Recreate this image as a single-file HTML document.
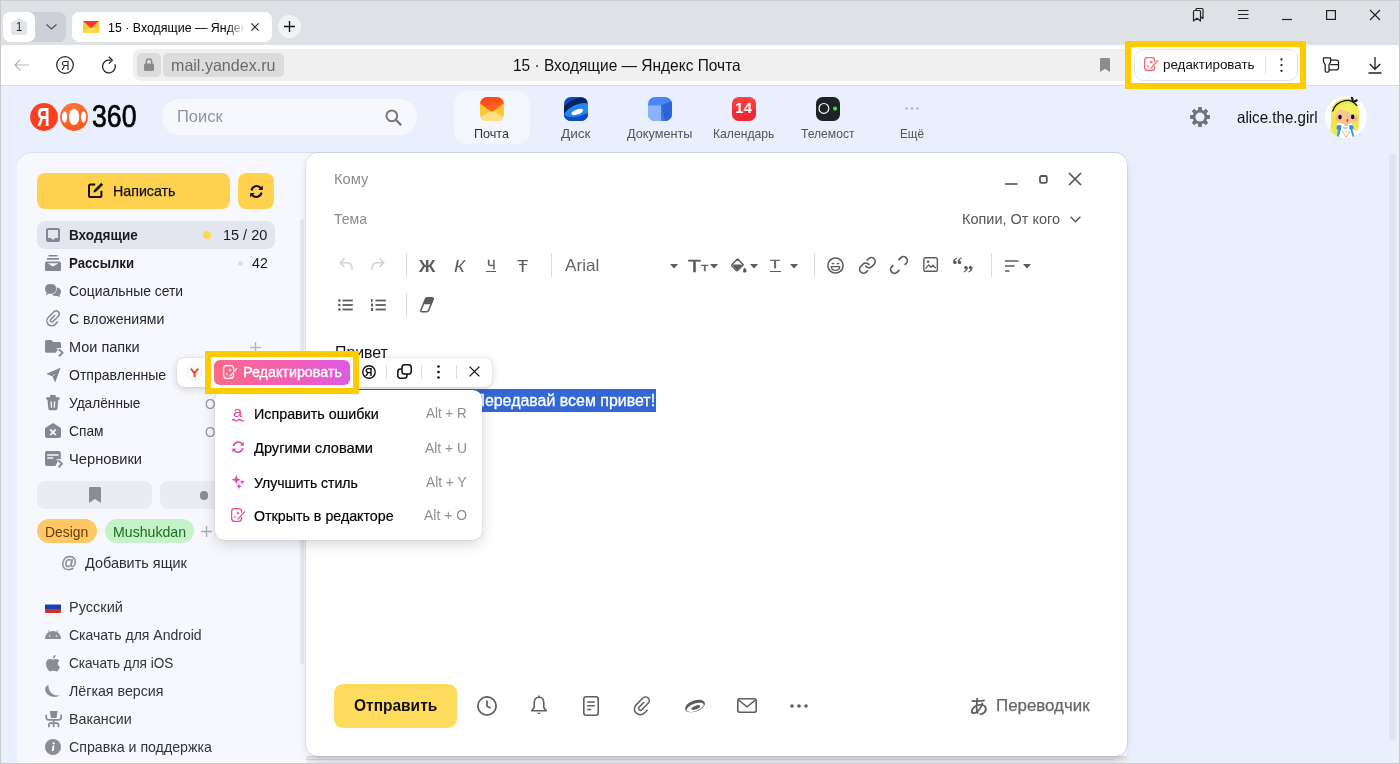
<!DOCTYPE html>
<html lang="ru"><head><meta charset="utf-8"><title>15 · Входящие — Яндекс Почта</title>
<style>
*{box-sizing:border-box;margin:0;padding:0}
html,body{width:1400px;height:764px;overflow:hidden}
body{position:relative;background:#eaeffe;font-family:"Liberation Sans",sans-serif;color:#000;font-size:15px}
.a{position:absolute}
.t{position:absolute;white-space:nowrap;line-height:1;transform-origin:0 50%}
svg{position:absolute;overflow:visible}
.dv{position:absolute;width:1px;background:#dcdcdc}

</style></head><body>
<div class="a" style="left:0px;top:0px;width:1400px;height:45px;background:#dee1e6"></div>
<div class="a" style="left:0px;top:45px;width:1400px;height:40px;background:#fff;border-radius:5px 5px 0 0"></div>
<div class="a" style="left:0px;top:85px;width:1400px;height:1px;background:#d7dbeb"></div>
<div class="a" style="left:3px;top:12px;width:63px;height:30px;background:#cdd0d6;border-radius:7px"></div>
<div class="a" style="left:3px;top:12px;width:32px;height:30px;background:#fff;border-radius:7px"></div>
<svg style="left:11px;top:18px;" width="16" height="17" viewBox="0 0 16 17"><path d="M8 .6 14.6 3.4Q16 4 16 5.6V13.5Q16 17 12.5 17H3.5Q0 17 0 13.5V5.6Q0 4 1.4 3.4Z" fill="#e1e4ea"/></svg>
<span class="t" style="left:15.50px;top:20.38px;font-size:13.5px;color:#222;transform:scaleX(0.8245);">1</span>
<svg style="left:45.5px;top:24px;" width="11" height="6" viewBox="0 0 11 6"><path d="M.5 .5 5.5 5 10.5 .5" fill="none" stroke="#555" stroke-width="1.3"/></svg>
<div class="a" style="left:72px;top:12px;width:200px;height:30px;background:#fff;border-radius:7px"></div>
<svg style="left:83px;top:21px;" width="16" height="12" viewBox="0 0 16 12"><rect width="16" height="12" fill="#ffcc33"/><path d="M0 12 8 5.5 16 12Z" fill="#ffdb4d"/><path d="M0 0H16L8 7.2Z" fill="#ff3333"/></svg>
<div class="a" style="left:107px;top:17px;width:140px;height:20px;overflow:hidden;-webkit-mask-image:linear-gradient(90deg,#000 120px,transparent 138px);mask-image:linear-gradient(90deg,#000 120px,transparent 138px)">
<span class="t" style="left:1.00px;top:3.54px;font-size:13.6px;color:#000;transform:scaleX(0.9117);">15 · Входящие — Яндекс Почта</span>
</div>
<svg style="left:251px;top:23px;" width="8" height="8" viewBox="0 0 8 8"><path d="M.4 .4 7.600 7.600M7.600 .4 .4 7.600" stroke="#222" stroke-width="1.100" fill="none"/></svg>
<div class="a" style="left:278px;top:15px;width:23px;height:23px;background:#f1f3f6;border-radius:50%"></div>
<svg style="left:284px;top:21px;" width="11" height="11" viewBox="0 0 11 11"><path d="M5.5 0V11M0 5.5H11" stroke="#111" stroke-width="1.3" fill="none"/></svg>
<svg style="left:1190px;top:7px;" width="16" height="16" viewBox="0 0 16 16"><path d="M3.5 4.5V14L7 11.2 10.5 14V4.5Q10.5 3.5 9.5 3.5H4.5Q3.5 3.5 3.5 4.5ZM6 3.2V2.5Q6 1.5 7 1.5H12Q13 1.5 13 2.5V11.5L10.7 9.7" fill="none" stroke="#222" stroke-width="1.2" stroke-linejoin="round"/></svg>
<svg style="left:1238px;top:10px;" width="10.5" height="9" viewBox="0 0 10.5 9"><path d="M0 .5H10.500M0 4.500H10.500M0 8.500H10.500" stroke="#222" stroke-width="1.200"/></svg>
<svg style="left:1282px;top:19px;" width="10" height="1" viewBox="0 0 10 1"><path d="M0 .5H10" stroke="#222" stroke-width="1.200"/></svg>
<svg style="left:1326px;top:10px;" width="10" height="10" viewBox="0 0 10 10"><rect x=".6" y=".6" width="8.8" height="8.8" fill="none" stroke="#222" stroke-width="1.2"/></svg>
<svg style="left:1370px;top:10px;" width="10" height="10" viewBox="0 0 10 10"><path d="M0 0 10 10M10 0 0 10" stroke="#222" stroke-width="1.2"/></svg>
<svg style="left:14px;top:59px;" width="15" height="12" viewBox="0 0 15 12"><path d="M6.5 .5 1 6 6.5 11.5M1 6H15" fill="none" stroke="#b5b5b5" stroke-width="1.2"/></svg>
<svg style="left:56px;top:56px;" width="18" height="18" viewBox="0 0 18 18"><circle cx="9" cy="9" r="8.3" fill="none" stroke="#222" stroke-width="1.2"/></svg>
<span class="t" style="left:60.50px;top:58.83px;font-size:13px;color:#222;transform:scaleX(0.9046);">Я</span>
<svg style="left:101px;top:56px;" width="16" height="18" viewBox="0 0 16 18"><path d="M13.9 8.2A6.4 6.4 0 1 1 9.6 4.3" fill="none" stroke="#222" stroke-width="1.3"/><path d="M7.8 .8 11.3 4.3 7.8 7.6" fill="none" stroke="#222" stroke-width="1.3"/></svg>
<div class="a" style="left:133px;top:49px;width:1003px;height:32px;background:#f0f0f0;border-radius:8px"></div>
<div class="a" style="left:137px;top:53px;width:24px;height:24px;background:#dcdcdc;border-radius:5px"></div>
<svg style="left:144px;top:58px;" width="10" height="13" viewBox="0 0 10 13"><rect x="0" y="5.5" width="10" height="7.5" rx="1.6" fill="#8a8a8a"/><path d="M2.3 6V3.7A2.7 2.7 0 0 1 7.7 3.7V6" fill="none" stroke="#8a8a8a" stroke-width="1.4"/></svg>
<div class="a" style="left:163px;top:53px;width:121px;height:24px;background:#dcdcdc;border-radius:5px"></div>
<span class="t" style="left:171.00px;top:56.71px;font-size:16.5px;color:#6a6a6a;transform:scaleX(0.9732);">mail.yandex.ru</span>
<span class="t" style="left:512.70px;top:57.12px;font-size:16.5px;color:#111;transform:scaleX(0.9376);">15 · Входящие — Яндекс Почта</span>
<svg style="left:1100px;top:58px;" width="10" height="14" viewBox="0 0 10 14"><path d="M0 1.2Q0 0 1.2 0H8.8Q10 0 10 1.2V14L5 10.8 0 14Z" fill="#8c8c8c"/></svg>
<div class="a" style="left:1125px;top:41px;width:181px;height:48px;background:#fff;border:6px solid #ffcc00"></div>
<div class="a" style="left:1133.5px;top:49px;width:164px;height:31.5px;background:#fff;border:1px solid #e3e3e3;border-radius:9px"></div>
<svg style="left:1144.4px;top:57.4px;" width="15" height="15" viewBox="0 0 15 15"><g fill="none" stroke="#ff5c72" stroke-width="1.250" stroke-linecap="round"><path d="M10.600 4.300V3.400Q10.600 .65 7.800 .65H3.400Q.65 .65 .65 3.400V10.600Q.65 13.350 3.400 13.350H7.800Q10.600 13.350 10.600 10.600V9.300"/><path d="M13.700 3.700 7.100 11.100"/></g><path d="M7 3.100 7.550 4.550 9 5.100 7.550 5.650 7 7.100 6.450 5.650 5 5.100 6.450 4.550Z" fill="#ff5c72"/><path d="M4 7.600 4.400 8.600 5.400 9 4.400 9.400 4 10.400 3.600 9.400 2.600 9 3.600 8.600Z" fill="#ff5c72"/></svg>
<span class="t" style="left:1162.90px;top:58.48px;font-size:13.5px;color:#111;transform:scaleX(0.9912);">редактировать</span>
<div class="a" style="left:1265px;top:56px;width:1px;height:18px;background:#e0e0e0"></div>
<svg style="left:1280px;top:57.6px;" width="3" height="14" viewBox="0 0 3 14"><circle cx="1.500" cy="1.400" r="1.150" fill="#222"/><circle cx="1.500" cy="7.100" r="1.150" fill="#222"/><circle cx="1.500" cy="12.800" r="1.150" fill="#222"/></svg>
<svg style="left:1322px;top:56px;" width="18" height="18" viewBox="0 0 18 18"><path d="M1.5 1.8H8.2Q8.6 1.8 8.6 2.2V5Q8.6 6.5 7.6 7.6 7 8.3 7 9.3V14.7Q7 16.2 5.5 16.2H4.7Q3.2 16.2 3.2 14.7V9.3Q3.2 8.3 2.6 7.6 1.5 6.5 1.5 5ZM8.6 4.2H14.5Q16.5 4.2 16.5 6.2V11.8Q16.5 13.8 14.5 13.8H7M8.3 8.6H16.5" fill="none" stroke="#222" stroke-width="1.3" stroke-linejoin="round"/></svg>
<svg style="left:1368px;top:57px;" width="14" height="17" viewBox="0 0 14 17"><path d="M7 0V12M1.8 7 7 12.3 12.2 7M.5 16H13.5" fill="none" stroke="#222" stroke-width="1.3"/></svg>
<svg style="left:30px;top:103px;" width="28" height="28" viewBox="0 0 28 28"><circle cx="14" cy="14" r="13.900" fill="#fc3f1d"/></svg>
<span class="t" style="left:37.20px;top:104.22px;font-size:26.5px;color:#fff;font-weight:700;transform:scaleX(0.6611);">Я</span>
<svg style="left:60px;top:103px;" width="28" height="28" viewBox="0 0 28 28"><defs><radialGradient id="lg2" cx=".4" cy=".3" r=".8"><stop offset="0" stop-color="#ff7a40"/><stop offset=".6" stop-color="#fb6429"/><stop offset="1" stop-color="#ee5018"/></radialGradient><clipPath id="cp2"><circle cx="14" cy="14" r="13.900"/></clipPath></defs><circle cx="14" cy="14" r="13.900" fill="url(#lg2)"/><g clip-path="url(#cp2)" fill="#fff"><ellipse cx="14.100" cy="14" rx="5.100" ry="8.100"/><ellipse cx="4.500" cy="14" rx="2.600" ry="5.800"/><ellipse cx="23.600" cy="14" rx="2.600" ry="5.800"/></g></svg>
<span class="t" style="left:92.30px;top:101.01px;font-size:31px;color:#000;transform:scaleX(0.8596);-webkit-text-stroke:.7px #000;">360</span>
<div class="a" style="left:162px;top:99px;width:255px;height:36px;background:#f7f8fe;border-radius:18px"></div>
<span class="t" style="left:177.30px;top:108.47px;font-size:17px;color:#93949f;transform:scaleX(0.9716);">Поиск</span>
<svg style="left:385px;top:109px;" width="17" height="17" viewBox="0 0 17 17"><circle cx="6.8" cy="6.8" r="5.4" fill="none" stroke="#777" stroke-width="2"/><path d="M10.8 10.8 15.6 15.6" stroke="#777" stroke-width="2.2" stroke-linecap="round"/></svg>
<div class="a" style="left:454px;top:91px;width:76px;height:53px;background:#f4f6fe;border-radius:13px"></div>
<svg style="left:480px;top:97px;" width="24" height="24" viewBox="0 0 24 24"><defs><linearGradient id="m1" x1="0" y1="0" x2=".6" y2="1"><stop offset="0" stop-color="#ff3a1a"/><stop offset="1" stop-color="#ff6f1c"/></linearGradient><clipPath id="mc"><rect width="24" height="24" rx="7"/></clipPath></defs><g clip-path="url(#mc)"><rect width="24" height="24" fill="#ffc832"/><path d="M0 24V21L12 12.500 24 21V24Z" fill="#ffe084"/><path d="M0 0H24V6.500L12.800 14.600Q12 15.200 11.200 14.600L0 6.500Z" fill="url(#m1)"/></g></svg>
<svg style="left:564px;top:97px;" width="24" height="24" viewBox="0 0 24 24"><defs><clipPath id="dk"><rect width="24" height="24" rx="7"/></clipPath></defs><g clip-path="url(#dk)"><rect width="24" height="24" fill="#0a4cc0"/><ellipse cx="11" cy="9" rx="13" ry="6.500" transform="rotate(-27 11 9)" fill="#06235e"/><ellipse cx="13" cy="15.500" rx="15" ry="7.500" transform="rotate(-27 13 15.500)" fill="#2486f3"/><ellipse cx="13.200" cy="15" rx="6.200" ry="2.500" transform="rotate(-20 13.200 15)" fill="#fff"/><path d="M0 17Q6 24 24 16V24H0Z" fill="#0a4cc0"/></g></svg>
<svg style="left:648px;top:97px;" width="24" height="24" viewBox="0 0 24 24"><defs><clipPath id="dc"><rect width="24" height="24" rx="7"/></clipPath></defs><g clip-path="url(#dc)"><rect width="24" height="24" fill="#4a86f7"/><path d="M13 8.500 24 4V24H17Z" fill="#2f63d8"/><path d="M0 8.500H13L13.500 24H0Z" fill="#8ab2ff"/><path d="M13 8.500 17 24H13.500Z" fill="#3d74ea"/></g></svg>
<svg style="left:732px;top:97px;" width="24" height="24" viewBox="0 0 24 24"><defs><linearGradient id="cal" x1="0" y1="0" x2="0" y2="1"><stop offset="0" stop-color="#ff4242"/><stop offset=".52" stop-color="#f7343a"/><stop offset=".53" stop-color="#ee2a32"/><stop offset="1" stop-color="#ee2a32"/></linearGradient></defs><rect width="24" height="24" rx="6.500" fill="url(#cal)"/></svg>
<span class="t" style="left:734.80px;top:100.80px;font-size:14.5px;color:#fff;font-weight:700;transform:scaleX(1.0526);">14</span>
<svg style="left:816px;top:97px;" width="24" height="24" viewBox="0 0 24 24"><rect width="24" height="24" rx="6.5" fill="#1d2226"/><circle cx="7.900" cy="11.400" r="4.900" fill="none" stroke="#fff" stroke-width="1.200"/><circle cx="19.100" cy="11.600" r="2.100" fill="#25e83a"/></svg>
<svg style="left:904.5px;top:107.3px;" width="14" height="3" viewBox="0 0 14 3"><circle cx="1.5" cy="1.5" r="1.4" fill="#b9bcc6"/><circle cx="7" cy="1.5" r="1.4" fill="#b9bcc6"/><circle cx="12.5" cy="1.5" r="1.4" fill="#b9bcc6"/></svg>
<span class="t" style="left:474.00px;top:126.69px;font-size:13.5px;color:#333;transform:scaleX(0.9328);">Почта</span>
<span class="t" style="left:561.00px;top:126.69px;font-size:13.5px;color:#555;transform:scaleX(1.0047);">Диск</span>
<span class="t" style="left:627.00px;top:126.69px;font-size:13.5px;color:#555;transform:scaleX(0.9406);">Документы</span>
<span class="t" style="left:713.00px;top:126.69px;font-size:13.5px;color:#555;transform:scaleX(0.9020);">Календарь</span>
<span class="t" style="left:801.00px;top:126.69px;font-size:13.5px;color:#555;transform:scaleX(0.8963);">Телемост</span>
<span class="t" style="left:899.50px;top:126.69px;font-size:13.5px;color:#555;transform:scaleX(0.8683);">Ещё</span>
<svg style="left:1190px;top:107px;" width="20" height="20" viewBox="0 0 20 20"><g transform="translate(10 10)"><g fill="#6f7178"><rect x="-1.900" y="-10" width="3.800" height="20" rx=".8"/><rect x="-1.900" y="-10" width="3.800" height="20" rx=".8" transform="rotate(45)"/><rect x="-1.900" y="-10" width="3.800" height="20" rx=".8" transform="rotate(90)"/><rect x="-1.900" y="-10" width="3.800" height="20" rx=".8" transform="rotate(135)"/><circle r="7.300"/></g><circle r="4.600" fill="#eaeffe"/></g></svg>
<span class="t" style="left:1236.80px;top:108.92px;font-size:16.5px;color:#111;transform:scaleX(0.9160);">alice.the.girl</span>
<svg style="left:1325px;top:96px;" width="42" height="42" viewBox="0 0 42 42"><defs><clipPath id="av"><circle cx="21" cy="21" r="21"/></clipPath></defs><circle cx="21" cy="21" r="21" fill="#fff"/><g clip-path="url(#av)"><path d="M6 20Q5 6 19 2.500Q32 2 33.800 14Q34.500 24 33.500 33Q31 36 27.500 33.500L27 27 12.500 27 13.500 38Q11 43 7 43L4.500 36Q6.500 30 6 20Z" fill="#ece650"/><path d="M4.400 33.500Q6 31.500 7.800 33L7.500 35.500Q6 34 4.800 35Z" fill="#f3ee8a"/><rect x="19.300" y="26.500" width="3.600" height="4.500" fill="#f3b57e"/><path d="M10 19Q10 13 16 12.500L31 12.500Q33.800 20 31.300 25Q27 28.800 21.500 28.200Q13 27.800 10.500 23Z" fill="#f8c691"/><circle cx="12.800" cy="23" r="2.200" fill="#f6a49a" opacity=".75"/><circle cx="30.500" cy="23" r="2" fill="#f6a49a" opacity=".75"/><path d="M9.300 21Q9.500 9.500 20 8Q30 7 33.200 13.500Q33.800 17 33.200 19Q26 18 21 15.200Q16.500 13 13.800 13.800Q11 16.500 9.300 21Z" fill="#f4ee62"/><path d="M7.800 15Q10.500 6.500 20 4.600Q27 3.300 31.700 9.400" fill="none" stroke="#111" stroke-width="1.300" stroke-linecap="round"/><path d="M27.300 5.800Q24.800 1 26.600 .6Q29.200 1.400 28.500 5Q31 2.600 33 3.600Q33 6.200 28.600 6.800Z" fill="#111"/><ellipse cx="15" cy="21.100" rx="1.750" ry="2.450" fill="#111"/><ellipse cx="27.700" cy="20.900" rx="1.750" ry="2.450" fill="#111"/><ellipse cx="22.400" cy="24.400" rx="1" ry="1.650" fill="#e8415f"/><path d="M22.600 20.500 23.600 21.800" stroke="#e89a78" stroke-width=".6"/><circle cx="14.300" cy="31.800" r="2.700" fill="#2f8fe8"/><circle cx="26" cy="31.400" r="2.500" fill="#2f8fe8"/><path d="M13 34 15.500 34 14 42 11.500 42Z" fill="#3f97e8"/><path d="M25.500 34 27.500 34 30 42 28 42Z" fill="#3f97e8"/><path d="M16.300 33.500H25L28 43H13.500Z" fill="#fff"/><path d="M16.300 30.200Q20.300 29.400 24.300 30.200L24.600 33.800Q20.300 34.800 16 33.800Z" fill="#fff"/><path d="M18.500 31.300Q20.500 32 22.500 31.300L22.300 32.300Q20.500 32.900 18.700 32.300Z" fill="#4a9aea"/><path d="M17.300 35 21 41.300 24.800 35" fill="none" stroke="#f0835a" stroke-width=".7"/><path d="M20.200 34.500 21 35.800 21.800 34.500Z" fill="#d8435a"/></g></svg>
<div class="a" style="left:17px;top:152.5px;width:1110px;height:620px;background:#f7f8fe;border-radius:14px 12px 0 0;box-shadow:0 -1px 0 rgba(190,198,230,.35)"></div>
<div class="a" style="left:1389px;top:153.5px;width:7px;height:587px;background:#dfe3f2;border-radius:3.500px"></div>
<div class="a" style="left:299.5px;top:219px;width:4.5px;height:445px;background:#e6e8f1;border-radius:3px"></div>
<div class="a" style="left:37px;top:173px;width:193px;height:36px;background:#ffd14f;border-radius:8px"></div>
<svg style="left:88px;top:183px;" width="15" height="15" viewBox="0 0 15 15"><path d="M7.2 1.600H2.600Q1 1.600 1 3.200V12.400Q1 14 2.600 14H11.800Q13.400 14 13.400 12.400V7.800" fill="none" stroke="#111" stroke-width="2"/><path d="M13.300 .3 14.700 1.700 7.900 8.600 5.900 9.100 6.400 7.100Z" fill="#111" stroke="#111" stroke-width=".8" stroke-linejoin="round"/></svg>
<span class="t" style="left:112.50px;top:183.45px;font-size:15px;color:#111;transform:scaleX(0.9482);-webkit-text-stroke:.25px #111;">Написать</span>
<div class="a" style="left:238px;top:173px;width:36px;height:36px;background:#ffd14f;border-radius:8px"></div>
<svg style="left:249.5px;top:184.5px;" width="13" height="13" viewBox="0 0 13 13"><path d="M1.500 5.500A5.200 5.200 0 0 1 10.800 3.200M11.500 7.500A5.200 5.200 0 0 1 2.200 9.800" fill="none" stroke="#111" stroke-width="2"/><path d="M12.800 .5V5H8.300ZM.2 12.500V8H4.700Z" fill="#111"/></svg>
<div class="a" style="left:37px;top:221px;width:238px;height:28px;background:#e4e6ef;border-radius:8px"></div>
<svg style="left:46px;top:228px;" width="14" height="14" viewBox="0 0 14 14"><path d="M2 0H12Q14 0 14 2V12Q14 14 12 14H2Q0 14 0 12V2Q0 0 2 0ZM2 2V10H4.800L7 12 9.200 10H12V2Z" fill="#868794" fill-rule="evenodd"/></svg>
<span class="t" style="left:69.00px;top:227.90px;font-size:14.5px;color:#1a1a1f;font-weight:700;transform:scaleX(0.9351);">Входящие</span>
<div class="a" style="left:203px;top:231px;width:8px;height:8px;background:#ffd84d;border-radius:50%"></div>
<span class="t" style="left:223.00px;top:227.90px;font-size:14.5px;color:#1a1a1f;transform:scaleX(0.9984);">15 / 20</span>
<svg style="left:45px;top:255px;" width="16" height="16" viewBox="0 0 16 16"><path d="M3.500 0H12.500V1.600H3.500ZM2 3H14V4.700H2ZM1.600 6.400H14.400Q16 6.400 16 8V14.400Q16 16 14.400 16H1.600Q0 16 0 14.400V8Q0 6.400 1.600 6.400ZM2.600 8.300 8 11.400 13.400 8.300Z" fill="#868794" fill-rule="evenodd"/></svg>
<span class="t" style="left:69.00px;top:255.90px;font-size:14.5px;color:#1a1a1f;font-weight:700;transform:scaleX(0.9105);">Рассылки</span>
<div class="a" style="left:237.5px;top:260.5px;width:5px;height:5px;background:#dcdfe8;border-radius:50%"></div>
<span class="t" style="left:251.50px;top:255.90px;font-size:14.5px;color:#1a1a1f;transform:scaleX(0.9783);">42</span>
<svg style="left:45px;top:284px;" width="16" height="13" viewBox="0 0 16 13"><path d="M10.800 3.300Q16 3.600 16 7.800Q16 9.600 14.600 10.800L15 13 12.400 11.900Q11.600 12.100 10.700 12.100Q8.500 12.100 7.200 11Z" fill="#868794"/><path d="M5.600 0Q11.200 0 11.200 4.900Q11.200 9.700 5.600 9.700Q4.800 9.700 4.100 9.500L1 11.300 1.600 8.400Q0 7 0 4.900Q0 0 5.600 0Z" fill="#868794" stroke="#f7f8fe" stroke-width="1.100" paint-order="stroke"/></svg>
<span class="t" style="left:69.00px;top:283.89px;font-size:14.5px;color:#26262c;transform:scaleX(0.9572);">Социальные сети</span>
<svg style="left:0px;top:0px;" width="1" height="1" viewBox="0 0 1 1"><g transform="translate(53 318.700) rotate(-45)"><path d="M.85 5.500H-2.500A4.850 4.850 0 0 1 -2.500 -4.200H5.500A3.100 3.100 0 0 1 5.500 2H-2A1.550 1.550 0 0 1 -2 -1.100H3.460" fill="none" stroke="#868794" stroke-width="1.500" stroke-linecap="round"/></g></svg>
<span class="t" style="left:69.00px;top:311.89px;font-size:14.5px;color:#26262c;transform:scaleX(0.9720);">С вложениями</span>
<svg style="left:45px;top:340px;" width="19" height="17" viewBox="0 0 19 17"><path d="M1.600 0H5.800Q6.600 0 7.200 .7L8.300 2H14.400Q16 2 16 3.600V8H11.500L13 9.700 10.500 12.700H1.600Q0 12.700 0 11.100V1.600Q0 0 1.600 0Z" fill="#868794"/><path d="M13.800 9.300 17.600 12.800 14 16.200" fill="none" stroke="#868794" stroke-width="1.900" stroke-linejoin="round"/></svg>
<span class="t" style="left:69.00px;top:339.89px;font-size:14.5px;color:#26262c;transform:scaleX(0.9986);">Мои папки</span>
<svg style="left:249.5px;top:341.5px;" width="11" height="11" viewBox="0 0 11 11"><path d="M5.500 0V11M0 5.500H11" stroke="#b4b6bf" stroke-width="1.400"/></svg>
<svg style="left:45.5px;top:367.5px;" width="15" height="15" viewBox="0 0 15 15"><path d="M14.600 -.2 .3 5.800 6.500 8.600 9.200 14.500Z" fill="#868794"/><path d="M9 6 6.400 8.700" stroke="#f7f8fe" stroke-width=".7"/></svg>
<span class="t" style="left:69.00px;top:367.89px;font-size:14.5px;color:#26262c;transform:scaleX(0.9685);">Отправленные</span>
<svg style="left:46.3px;top:395.3px;" width="14" height="15.5" viewBox="0 0 14 15.5"><path d="M5 0H8.800Q9.800 0 9.800 1V2.300H12.600Q13.800 2.300 13.800 3.500T12.600 4.800H12.300L11.500 13.600Q11.400 15.200 9.800 15.200H4Q2.400 15.200 2.300 13.600L1.500 4.800H1.200Q0 4.800 0 3.500T1.200 2.300H4V1Q4 0 5 0ZM4.500 6.500 4.900 12.800H6.100L5.900 6.500ZM7.900 6.500 7.700 12.800H8.900L9.300 6.500Z" fill="#868794" fill-rule="evenodd"/></svg>
<span class="t" style="left:69.00px;top:395.89px;font-size:14.5px;color:#26262c;transform:scaleX(0.9447);">Удалённые</span>
<span class="t" style="left:204.50px;top:396.64px;font-size:14px;color:#9a9ba3;transform:scaleX(0.9636);">О</span>
<svg style="left:45px;top:423px;" width="16" height="15" viewBox="0 0 16 15"><path d="M8 0 15.200 4.500Q16 5 16 6V13Q16 15 14 15H2Q0 15 0 13V6Q0 5 .8 4.500ZM5.800 5.800 4.600 7 6.800 9.200 4.600 11.400 5.800 12.600 8 10.400 10.200 12.600 11.400 11.400 9.200 9.200 11.400 7 10.200 5.800 8 8Z" fill="#868794" fill-rule="evenodd"/></svg>
<span class="t" style="left:69.00px;top:423.89px;font-size:14.5px;color:#26262c;transform:scaleX(0.9483);">Спам</span>
<span class="t" style="left:204.50px;top:424.64px;font-size:14px;color:#9a9ba3;transform:scaleX(0.9636);">О</span>
<svg style="left:45px;top:451.3px;" width="19" height="17" viewBox="0 0 19 17"><path d="M2 0H13.800Q15.800 0 15.800 2V8.300H11.300L13 10 10.400 15H2Q0 15 0 13V2Q0 0 2 0ZM2.300 3.200V4.800H13.500V3.200ZM2.300 6.300V7.800H8.200V6.300Z" fill="#868794" fill-rule="evenodd"/><path d="M13.300 9.400 17 12.700 13.700 16.400" fill="none" stroke="#868794" stroke-width="1.900" stroke-linejoin="round"/></svg>
<span class="t" style="left:69.00px;top:451.89px;font-size:14.5px;color:#26262c;transform:scaleX(1.0129);">Черновики</span>
<div class="a" style="left:37px;top:481px;width:115px;height:28px;background:#ebecf2;border-radius:8px"></div>
<div class="a" style="left:160px;top:481px;width:115px;height:28px;background:#ebecf2;border-radius:8px"></div>
<svg style="left:89px;top:487px;" width="12" height="16" viewBox="0 0 12 16"><path d="M0 1.200Q0 0 1.200 0H10.800Q12 0 12 1.200V16L6 12 0 16Z" fill="#8b8c96"/></svg>
<div class="a" style="left:199.5px;top:491px;width:8.5px;height:8.5px;background:#8b8c96;border-radius:50%"></div>
<div class="a" style="left:37px;top:519px;width:60px;height:24px;background:#ffc766;border-radius:12px"></div>
<span class="t" style="left:45.10px;top:523.65px;font-size:15px;color:#6a3d00;transform:scaleX(0.9266);">Design</span>
<div class="a" style="left:105px;top:519px;width:88.5px;height:24px;background:#c5f2c6;border-radius:12px"></div>
<span class="t" style="left:113.00px;top:523.65px;font-size:15px;color:#1b6e1f;transform:scaleX(0.9419);">Mushukdan</span>
<svg style="left:200.5px;top:525.5px;" width="11" height="11" viewBox="0 0 11 11"><path d="M5.500 0V11M0 5.500H11" stroke="#aeb0b8" stroke-width="1.400"/></svg>
<span class="t" style="left:60.80px;top:554.12px;font-size:16.5px;color:#8b8c96;transform:scaleX(0.9666);-webkit-text-stroke:.35px #8b8c96;">@</span>
<span class="t" style="left:84.50px;top:555.89px;font-size:14.5px;color:#2e2e35;transform:scaleX(0.9960);">Добавить ящик</span>
<svg style="left:45px;top:601px;" width="16" height="12" viewBox="0 0 16 12"><rect width="16" height="12" rx="1" fill="#fff"/><rect y="3.500" width="16" height="4.500" fill="#1443b8"/><path d="M0 8H16V11Q16 12 15 12H1Q0 12 0 11Z" fill="#d8301f"/></svg>
<span class="t" style="left:69.00px;top:599.89px;font-size:14.5px;color:#33333a;transform:scaleX(1.0010);">Русский</span>
<svg style="left:45px;top:630px;" width="16" height="9" viewBox="0 0 16 9"><path d="M0 9Q.3 3.800 4 2L2.800 .3 3.400 0 4.700 1.700Q6.200 1 8 1T11.300 1.700L12.600 0 13.200 .3 12 2Q15.700 3.800 16 9ZM4.600 5.200A.8 .8 0 1 0 4.600 6.800 .8 .8 0 0 0 4.600 5.200ZM11.400 5.200A.8 .8 0 1 0 11.400 6.800 .8 .8 0 0 0 11.400 5.200Z" fill="#8b8c96" fill-rule="evenodd"/></svg>
<span class="t" style="left:69.00px;top:627.89px;font-size:14.5px;color:#33333a;transform:scaleX(0.9667);">Скачать для Android</span>
<svg style="left:46px;top:654.5px;" width="14" height="16.5" viewBox="0 0 14 16.5"><path d="M9.600 0Q9.700 1.400 8.800 2.500T6.800 3.600Q6.700 2.300 7.600 1.200T9.600 0ZM6.900 4.600Q7.600 4.600 8.500 4.200T10.200 3.900Q12.300 4 13.400 5.700Q11.600 6.800 11.700 8.800T13.900 12Q13.300 13.700 12.400 15T10.400 16.400Q9.700 16.400 8.900 16T7.200 15.700 5.500 16Q4.700 16.400 4.100 16.400 2.300 15.600 1.100 13.200 0 10.200 0 8.900Q0 6.700 1.100 5.300T3.900 3.900Q4.800 3.900 5.700 4.300T6.900 4.600Z" fill="#8b8c96"/></svg>
<span class="t" style="left:69.00px;top:655.89px;font-size:14.5px;color:#33333a;transform:scaleX(0.9376);">Скачать для iOS</span>
<svg style="left:45px;top:685px;" width="15" height="12" viewBox="0 0 15 12"><path d="M3.500 0Q3 5.500 7.500 9Q10.500 11 15 10.500Q11 12.800 6.500 11.500Q.5 9.500 0 4Q0 1.500 3.500 0Z" fill="#8b8c96"/></svg>
<span class="t" style="left:69.00px;top:683.89px;font-size:14.5px;color:#33333a;transform:scaleX(0.9801);">Лёгкая версия</span>
<svg style="left:44.8px;top:711px;" width="17" height="16" viewBox="0 0 17 16"><path d="M4.800 0H12.600L11.500 7H5.900Z" fill="#8b8c96"/><path d="M1.200 4.300V6.300Q1.200 8.800 3.700 8.800H13.700Q16.200 8.800 16.200 6.300V4.300M8.700 8.800V12M3.900 15.400V13.800Q3.900 12 5.700 12H11.700Q13.500 12 13.500 13.800V15.400M8.700 12V15.400" fill="none" stroke="#8b8c96" stroke-width="1.750" stroke-linecap="round"/></svg>
<span class="t" style="left:69.00px;top:711.89px;font-size:14.5px;color:#33333a;transform:scaleX(0.9803);">Вакансии</span>
<svg style="left:45px;top:739px;" width="16" height="16" viewBox="0 0 16 16"><circle cx="8" cy="8" r="8" fill="#8b8c96"/><path d="M7.600 6.400H9.400L8.600 12H6.800ZM8.800 3.200A1.100 1.100 0 1 1 8.700 5.400 1.100 1.100 0 0 1 8.800 3.200Z" fill="#fff"/></svg>
<span class="t" style="left:69.00px;top:739.89px;font-size:14.5px;color:#33333a;transform:scaleX(0.9773);">Справка и поддержка</span>
<div class="a" style="left:306px;top:748px;width:821px;height:16px;background:linear-gradient(#fff 8px,#e2e2e2 8.500px,#e9e9e9 11px,#efefef 16px)"></div>
<div class="a" style="left:306px;top:759.3px;width:808px;height:0.8px;background:#d6d6d6"></div>
<div class="a" style="left:306px;top:153px;width:821px;height:603px;background:#fff;border-radius:12px;box-shadow:0 0 0 .5px rgba(120,130,175,.3),0 5px 9px -2px rgba(50,60,110,.24)"></div>
<span class="t" style="left:334.00px;top:172.20px;font-size:14.5px;color:#8c8c8c;transform:scaleX(1.0169);">Кому</span>
<span class="t" style="left:334.00px;top:211.90px;font-size:14.5px;color:#8c8c8c;transform:scaleX(0.9660);">Тема</span>
<svg style="left:1004.5px;top:183px;" width="12.5" height="2" viewBox="0 0 12.5 2"><path d="M0 1H12.500" stroke="#555" stroke-width="1.600"/></svg>
<svg style="left:1038.5px;top:174.8px;" width="9" height="9" viewBox="0 0 9 9"><rect x="1" y="1" width="6.800" height="6.800" rx="1.500" fill="none" stroke="#555" stroke-width="1.800"/></svg>
<svg style="left:1068px;top:171.6px;" width="14" height="14" viewBox="0 0 14 14"><path d="M1 1 13 13M13 1 1 13" stroke="#555" stroke-width="1.700"/></svg>
<span class="t" style="left:962.00px;top:211.90px;font-size:14.5px;color:#555;transform:scaleX(0.9985);">Копии, От кого</span>
<svg style="left:1069.5px;top:215.5px;" width="11" height="7" viewBox="0 0 11 7"><path d="M.6 .8 5.500 5.800 10.400 .8" fill="none" stroke="#555" stroke-width="1.300"/></svg>
<svg style="left:339px;top:258.3px;" width="14" height="12" viewBox="0 0 14 12"><path d="M5 .9 1.200 4.700 5 8.500M1.500 4.700H8Q13 4.700 13 10.500V11.500" fill="none" stroke="#d2d2d2" stroke-width="1.600" stroke-linecap="round" stroke-linejoin="round"/></svg>
<svg style="left:371px;top:258.3px;" width="14" height="12" viewBox="0 0 14 12"><path d="M9 .9 12.800 4.700 9 8.500M12.500 4.700H6Q1 4.700 1 10.500V11.500" fill="none" stroke="#d2d2d2" stroke-width="1.600" stroke-linecap="round" stroke-linejoin="round"/></svg>
<div class="dv" style="left:406px;top:253px;height:24px"></div>
<span class="t" style="left:419.20px;top:258.87px;font-size:16.6px;color:#5c5c5c;font-weight:700;transform:scaleX(1.0860);">Ж</span>
<span class="t" style="left:453.50px;top:258.87px;font-size:16.6px;color:#5c5c5c;font-style:italic;transform:scaleX(1.1239);">К</span>
<span class="t" style="left:486.50px;top:258.52px;font-size:12px;color:#5c5c5c;transform:scaleX(1.0619);-webkit-text-stroke:.3px #5c5c5c;">Ч</span>
<div class="a" style="left:486px;top:271.1px;width:10px;height:1.2px;background:#5c5c5c"></div>
<span class="t" style="left:517.20px;top:258.87px;font-size:16.6px;color:#5c5c5c;transform:scaleX(1.1137);">Т</span>
<div class="a" style="left:518.5px;top:263.9px;width:8.5px;height:1.2px;background:#5c5c5c"></div>
<div class="dv" style="left:551px;top:253px;height:24px"></div>
<span class="t" style="left:564.80px;top:257.12px;font-size:16.5px;color:#666;transform:scaleX(1.0383);">Arial</span>
<svg style="left:670px;top:263.7px;" width="8" height="4.5" viewBox="0 0 8 4.5"><path d="M0 0H8L4 4.500Z" fill="#5c5c5c"/></svg>
<span class="t" style="left:687.80px;top:258.01px;font-size:16.3px;color:#5c5c5c;transform:scaleX(1.3053);-webkit-text-stroke:.45px #5c5c5c;">T</span>
<span class="t" style="left:700.50px;top:263.10px;font-size:9.8px;color:#5c5c5c;transform:scaleX(1.2358);-webkit-text-stroke:.4px #5c5c5c;">T</span>
<svg style="left:709.6px;top:263.7px;" width="8" height="4.5" viewBox="0 0 8 4.5"><path d="M0 0H8L4 4.500Z" fill="#5c5c5c"/></svg>
<svg style="left:730.5px;top:258px;" width="16" height="15" viewBox="0 0 16 15"><path d="M6.500 1 12.300 6.800 6.800 12.300Q6 13 5.200 12.300L1 8Q.3 7.200 1 6.500ZM2.200 7.200H10.600" fill="none" stroke="#5c5c5c" stroke-width="1.500" stroke-linejoin="round"/><path d="M2 7.400H11L6.500 12 5.600 12Z" fill="#5c5c5c"/><path d="M13.800 9.500Q15.600 12 15.600 13T13.800 14.600 12 13 13.800 9.500Z" fill="#5c5c5c"/></svg>
<svg style="left:749.6px;top:263.7px;" width="8" height="4.5" viewBox="0 0 8 4.5"><path d="M0 0H8L4 4.500Z" fill="#5c5c5c"/></svg>
<span class="t" style="left:770.10px;top:259.46px;font-size:11.3px;color:#5c5c5c;transform:scaleX(1.4760);-webkit-text-stroke:.35px #5c5c5c;">T</span>
<div class="a" style="left:769.6px;top:270.5px;width:11.6px;height:1.3px;background:#5c5c5c"></div>
<svg style="left:789.6px;top:263.7px;" width="8" height="4.5" viewBox="0 0 8 4.5"><path d="M0 0H8L4 4.500Z" fill="#5c5c5c"/></svg>
<div class="dv" style="left:814px;top:253px;height:24px"></div>
<svg style="left:826.5px;top:257px;" width="17" height="17" viewBox="0 0 17 17"><circle cx="8.500" cy="8.500" r="7.600" fill="none" stroke="#5c5c5c" stroke-width="1.500"/><path d="M4.300 9.600H12.700Q12.300 13.400 8.500 13.400T4.300 9.600Z" fill="none" stroke="#5c5c5c" stroke-width="1.300"/><path d="M4.800 7.200Q6 5.600 7.200 7.200M9.800 7.200Q11 5.600 12.200 7.200" fill="none" stroke="#5c5c5c" stroke-width="1.200"/></svg>
<svg style="left:857.6px;top:255.8px;" width="18.8" height="18.8" viewBox="0 0 24 24"><g fill="none" stroke="#5c5c5c" stroke-width="2.100" stroke-linecap="round" stroke-linejoin="round"><path d="M10 13a5 5 0 0 0 7.540 .54l3-3a5 5 0 0 0-7.070-7.070l-1.720 1.710"/><path d="M14 11a5 5 0 0 0-7.540-.54l-3 3a5 5 0 0 0 7.070 7.070l1.710-1.710"/></g></svg>
<svg style="left:0px;top:0px;" width="1" height="1" viewBox="0 0 1 1"><g transform="translate(899 265) rotate(-45)" fill="none" stroke="#5c5c5c" stroke-width="1.700" stroke-linecap="round"><path d="M3.800 -3.900H6.300A3.900 3.900 0 0 1 6.300 3.900H4.800"/><path d="M-3.800 3.900H-6.300A3.900 3.900 0 0 1 -6.300 -3.900H-4.800"/></g></svg>
<svg style="left:923.2px;top:257.2px;" width="15.2" height="15" viewBox="0 0 16 16"><rect x=".8" y=".8" width="14.400" height="14.400" rx="2" fill="none" stroke="#5c5c5c" stroke-width="1.500"/><path d="M2.500 12.500 6 8.500 8.300 11 10.500 8.800 13.500 12" fill="none" stroke="#5c5c5c" stroke-width="1.300"/><circle cx="5.300" cy="5" r="1.300" fill="#5c5c5c"/></svg>
<span class="t" style="left:952.30px;top:254.85px;font-size:20px;color:#5c5c5c;font-weight:700;transform:scaleX(1.0494);font-family:'Liberation Serif',serif;">“</span>
<span class="t" style="left:962.90px;top:251.70px;font-size:20px;color:#5c5c5c;font-weight:700;transform:scaleX(1.0594);font-family:'Liberation Serif',serif;">„</span>
<div class="dv" style="left:991px;top:253px;height:24px"></div>
<svg style="left:1005px;top:259.5px;" width="14" height="12" viewBox="0 0 14 12"><path d="M0 1H13.500M0 6H9.500M0 11H4.500" stroke="#5c5c5c" stroke-width="1.600"/></svg>
<svg style="left:1023.3px;top:263.7px;" width="8" height="4.5" viewBox="0 0 8 4.5"><path d="M0 0H8L4 4.500Z" fill="#5c5c5c"/></svg>
<svg style="left:338px;top:299px;" width="15" height="12" viewBox="0 0 15 12"><g fill="#5c5c5c"><circle cx="1.300" cy="1.500" r="1.300"/><circle cx="1.300" cy="6" r="1.300"/><circle cx="1.300" cy="10.500" r="1.300"/><rect x="4.500" y=".6" width="10.300" height="1.800"/><rect x="4.500" y="5.100" width="10.300" height="1.800"/><rect x="4.500" y="9.600" width="10.300" height="1.800"/></g></svg>
<svg style="left:370.5px;top:299px;" width="15" height="12" viewBox="0 0 15 12"><g fill="#5c5c5c"><rect x="0" y="0" width="1.500" height="3"/><rect x="0" y="4.500" width="2" height="3"/><rect x="0" y="9" width="2" height="3"/><rect x="4.500" y=".6" width="10.300" height="1.800"/><rect x="4.500" y="5.100" width="10.300" height="1.800"/><rect x="4.500" y="9.600" width="10.300" height="1.800"/></g></svg>
<div class="dv" style="left:406px;top:293px;height:24px"></div>
<svg style="left:420px;top:297px;" width="15" height="16" viewBox="0 0 15 16"><path d="M7 .8H12Q13.700 .8 13.100 2.400L8.600 13.400Q8.100 14.700 6.700 14.700H2Q.3 14.700 .9 13.100L5.400 2.100Q5.900 .8 7 .8Z" fill="none" stroke="#5c5c5c" stroke-width="1.500"/><path d="M6.500 .8H12.500Q13.700 .8 13.200 2.200L11.100 7.300H3.300L5.400 2Q5.900 .8 6.500 .8Z" fill="#5c5c5c"/></svg>
<span class="t" style="left:334.50px;top:345.46px;font-size:16px;color:#111;transform:scaleX(0.9908);">Привет</span>
<div class="a" style="left:334px;top:389px;width:322px;height:23px;background:#3367d6"></div>
<span class="t" style="left:334.50px;top:393.16px;font-size:16px;color:#fff;transform:scaleX(0.9965);-webkit-text-stroke:.3px #fff;">Ну как твои дела? Передавай всем привет!</span>
<div class="a" style="left:334px;top:684px;width:123px;height:44px;background:#ffdb5e;border-radius:9px"></div>
<span class="t" style="left:353.80px;top:696.97px;font-size:17px;color:#111;font-weight:700;transform:scaleX(0.9114);">Отправить</span>
<svg style="left:477px;top:696px;" width="20" height="20" viewBox="0 0 20 20"><circle cx="10" cy="10" r="9.100" fill="none" stroke="#5e5e5e" stroke-width="1.700"/><path d="M10 4.600V10.300L13.600 12.100" fill="none" stroke="#5e5e5e" stroke-width="1.700"/></svg>
<svg style="left:530px;top:695px;" width="18" height="21" viewBox="0 0 18 21"><path d="M9 2.300Q13.800 2.300 13.800 8V12.500L16.300 15.800H1.700L4.200 12.500V8Q4.200 2.300 9 2.300ZM9 .5V2.300" fill="none" stroke="#5e5e5e" stroke-width="1.600" stroke-linejoin="round"/><path d="M6.800 17.800Q9 20.400 11.200 17.800Z" fill="#5e5e5e"/></svg>
<svg style="left:583px;top:696px;" width="16" height="20" viewBox="0 0 16 20"><rect x=".8" y=".8" width="14.400" height="18.400" rx="2.200" fill="none" stroke="#5e5e5e" stroke-width="1.600"/><path d="M4.200 6H11.800M4.200 9.800H11.800M4.200 13.600H8" stroke="#5e5e5e" stroke-width="1.500"/></svg>
<svg style="left:0px;top:0px;" width="1" height="1" viewBox="0 0 1 1"><g transform="translate(641.800 706.300) rotate(-45) scale(1.200)"><path d="M.85 5.500H-2.500A4.850 4.850 0 0 1 -2.500 -4.200H5.500A3.100 3.100 0 0 1 5.500 2H-2A1.550 1.550 0 0 1 -2 -1.100H3.460" fill="none" stroke="#5e5e5e" stroke-width="1.250" stroke-linecap="round"/></g></svg>
<svg style="left:684px;top:698px;" width="22" height="16" viewBox="0 0 22 16"><g transform="rotate(-20 11 8)"><ellipse cx="11" cy="8" rx="10.400" ry="5.500" fill="#5e5e5e"/><ellipse cx="10.800" cy="9.300" rx="9" ry="3.700" fill="#fff"/><ellipse cx="11.200" cy="9.700" rx="4.600" ry="1.750" fill="#5e5e5e"/></g></svg>
<svg style="left:737px;top:698px;" width="20" height="15" viewBox="0 0 20 15"><rect x=".8" y=".8" width="18.400" height="13.400" rx="2" fill="none" stroke="#5e5e5e" stroke-width="1.600"/><path d="M1.500 2 10 8.800 18.500 2" fill="none" stroke="#5e5e5e" stroke-width="1.600"/></svg>
<svg style="left:790px;top:704px;" width="18" height="4" viewBox="0 0 18 4"><circle cx="2" cy="2" r="1.800" fill="#5e5e5e"/><circle cx="9" cy="2" r="1.800" fill="#5e5e5e"/><circle cx="16" cy="2" r="1.800" fill="#5e5e5e"/></svg>
<span class="t" style="left:969.20px;top:695.75px;font-size:19.5px;color:#5e5e5e;font-weight:500;transform:scaleX(0.9986);font-family:'Noto Sans CJK JP','Liberation Sans',sans-serif;">あ</span>
<span class="t" style="left:995.90px;top:697.37px;font-size:17px;color:#666;transform:scaleX(0.9928);-webkit-text-stroke:.25px #666;">Переводчик</span>
<div class="a" style="left:177px;top:357.5px;width:315px;height:29.5px;background:#fff;border-radius:7px;box-shadow:0 2px 8px rgba(0,0,0,.16),0 0 1px rgba(0,0,0,.25)"></div>
<svg style="left:187px;top:365px;" width="15" height="15" viewBox="0 0 15 15"><circle cx="7.500" cy="7.500" r="7.100" fill="#fff" stroke="#e4e4e4" stroke-width=".8"/><path d="M3.800 3.600 7.500 8.200 11.200 3.600M7.500 8V12" fill="none" stroke="#fc3f1d" stroke-width="1.900" stroke-linejoin="round"/></svg>
<div class="a" style="left:215px;top:390px;width:267px;height:149.5px;background:#fff;border-radius:9px;box-shadow:0 4px 14px rgba(0,0,0,.16),0 0 1px rgba(0,0,0,.3)"></div>
<div class="a" style="left:205px;top:351px;width:153.6px;height:42.6px;background:#fff;border:6px solid #ffcc00"></div>
<div class="a" style="left:214px;top:360px;width:136px;height:25px;border-radius:6px;background:linear-gradient(90deg,#fa6a86 0%,#f25fb4 55%,#dd5ae6 100%)"></div>
<svg style="left:223.3px;top:364.8px;" width="15" height="15" viewBox="0 0 15 15"><g fill="none" stroke="#fff" stroke-width="1.250" stroke-linecap="round"><path d="M10.600 4.300V3.400Q10.600 .65 7.800 .65H3.400Q.65 .65 .65 3.400V10.600Q.65 13.350 3.400 13.350H7.800Q10.600 13.350 10.600 10.600V9.300"/><path d="M13.700 3.700 7.100 11.100"/></g><path d="M7 3.100 7.550 4.550 9 5.100 7.550 5.650 7 7.100 6.450 5.650 5 5.100 6.450 4.550Z" fill="#fff"/><path d="M4 7.600 4.400 8.600 5.400 9 4.400 9.400 4 10.400 3.600 9.400 2.600 9 3.600 8.600Z" fill="#fff"/></svg>
<span class="t" style="left:243.00px;top:364.79px;font-size:14.5px;color:#fff;transform:scaleX(0.9877);-webkit-text-stroke:.3px #fff;">Редактировать</span>
<svg style="left:362px;top:364.9px;" width="14" height="14" viewBox="0 0 14 14"><circle cx="7" cy="7" r="6.200" fill="none" stroke="#111" stroke-width="1.400"/></svg>
<span class="t" style="left:365.30px;top:366.51px;font-size:11px;color:#111;font-weight:700;transform:scaleX(0.9354);">Я</span>
<div class="dv" style="left:386px;top:364.500px;height:14.500px"></div>
<svg style="left:396.5px;top:364.4px;" width="15" height="15" viewBox="0 0 15 15"><rect x="5" y=".8" width="9.200" height="9.200" rx="2.600" fill="none" stroke="#111" stroke-width="1.500"/><path d="M5 5H3.400Q.8 5 .8 7.600V11.600Q.8 14.200 3.400 14.200H7.400Q10 14.200 10 11.600V10" fill="none" stroke="#111" stroke-width="1.500"/></svg>
<div class="dv" style="left:421px;top:364.500px;height:14.500px"></div>
<svg style="left:437.3px;top:364.9px;" width="3" height="14" viewBox="0 0 3 14"><circle cx="1.500" cy="1.500" r="1.300" fill="#111"/><circle cx="1.500" cy="7" r="1.300" fill="#111"/><circle cx="1.500" cy="12.500" r="1.300" fill="#111"/></svg>
<div class="dv" style="left:456px;top:364.500px;height:14.500px"></div>
<svg style="left:468.5px;top:366.4px;" width="11" height="11" viewBox="0 0 11 11"><path d="M.6 .6 10.400 10.400M10.400 .6 .6 10.400" stroke="#111" stroke-width="1.300"/></svg>
<svg style="left:232px;top:407.5px;" width="12" height="14" viewBox="0 0 12 14"><defs><linearGradient id="pg1" x1="0" y1="0" x2="1" y2="1"><stop offset="0" stop-color="#f0457a"/><stop offset="1" stop-color="#d94fd0"/></linearGradient></defs><path d="M0 12.200Q1.500 10.800 3 12.200T6 12.200 9 12.200 12 12.200" fill="none" stroke="url(#pg1)" stroke-width="1.200"/></svg>
<span class="t" style="left:233.30px;top:403.85px;font-size:15px;color:#e8458f;transform:scaleX(1.1020);">a</span>
<span class="t" style="left:254.10px;top:406.05px;font-size:15px;color:#000;transform:scaleX(0.9544);-webkit-text-stroke:.2px #000;">Исправить ошибки</span>
<span class="t" style="left:426.20px;top:406.29px;font-size:14.5px;color:#8f8f8f;transform:scaleX(0.9238);">Alt + R</span>
<svg style="left:231.8px;top:441.3px;" width="12.2" height="12.2" viewBox="0 0 13 13"><defs><linearGradient id="pg2" x1="0" y1="0" x2="1" y2="1"><stop offset="0" stop-color="#f0457a"/><stop offset="1" stop-color="#d94fd0"/></linearGradient></defs><path d="M1.500 5.500A5.200 5.200 0 0 1 10.800 3.200M11.500 7.500A5.200 5.200 0 0 1 2.200 9.800" fill="none" stroke="url(#pg2)" stroke-width="1.700"/><path d="M12.600 .8V5H8.400ZM.4 12.200V8H4.600Z" fill="url(#pg2)"/></svg>
<span class="t" style="left:254.10px;top:440.25px;font-size:15px;color:#000;transform:scaleX(0.9729);-webkit-text-stroke:.2px #000;">Другими словами</span>
<span class="t" style="left:424.90px;top:440.50px;font-size:14.5px;color:#8f8f8f;transform:scaleX(0.9534);">Alt + U</span>
<svg style="left:231.5px;top:475px;" width="13" height="13" viewBox="0 0 13 13"><defs><linearGradient id="pg3" x1="0" y1="0" x2="1" y2="1"><stop offset="0" stop-color="#f0457a"/><stop offset="1" stop-color="#d94fd0"/></linearGradient></defs><path d="M4.300 0 5.600 3.400 9 4.700 5.600 6 4.300 9.400 3 6 -.4 4.700 3 3.400Z" fill="url(#pg3)"/><path d="M10.200 4.500 10.900 6.300 12.700 7 10.900 7.700 10.200 9.500 9.500 7.700 7.700 7 9.500 6.300Z" fill="url(#pg3)"/><path d="M7 8.600 7.800 10.600 9.800 11.400 7.800 12.200 7 14.200 6.200 12.200 4.200 11.400 6.200 10.600Z" fill="url(#pg3)"/></svg>
<span class="t" style="left:254.10px;top:474.55px;font-size:15px;color:#000;transform:scaleX(0.9339);-webkit-text-stroke:.2px #000;">Улучшить стиль</span>
<span class="t" style="left:426.20px;top:474.79px;font-size:14.5px;color:#8f8f8f;transform:scaleX(0.9467);">Alt + Y</span>
<svg style="left:231.2px;top:508.4px;" width="15" height="15" viewBox="0 0 15 15"><defs><linearGradient id="pg4" x1="0" y1="0" x2="1" y2="1"><stop offset="0" stop-color="#f0457a"/><stop offset="1" stop-color="#d94fd0"/></linearGradient></defs><g fill="none" stroke="url(#pg4)" stroke-width="1.250" stroke-linecap="round"><path d="M10.600 4.300V3.400Q10.600 .65 7.800 .65H3.400Q.65 .65 .65 3.400V10.600Q.65 13.350 3.400 13.350H7.800Q10.600 13.350 10.600 10.600V9.300"/><path d="M13.700 3.700 7.100 11.100"/></g><path d="M7 3.100 7.550 4.550 9 5.100 7.550 5.650 7 7.100 6.450 5.650 5 5.100 6.450 4.550Z" fill="url(#pg4)"/><path d="M4 7.600 4.400 8.600 5.400 9 4.400 9.400 4 10.400 3.600 9.400 2.600 9 3.600 8.600Z" fill="url(#pg4)"/></svg>
<span class="t" style="left:254.10px;top:508.05px;font-size:15px;color:#000;transform:scaleX(0.9490);-webkit-text-stroke:.2px #000;">Открыть в редакторе</span>
<span class="t" style="left:423.80px;top:508.29px;font-size:14.5px;color:#8f8f8f;transform:scaleX(0.9607);">Alt + O</span>
<div class="a" style="left:0;top:0;width:1400px;height:764px;border:1px solid #cbcbcb;border-top-color:#cdcecf;z-index:50"></div>
</body></html>
